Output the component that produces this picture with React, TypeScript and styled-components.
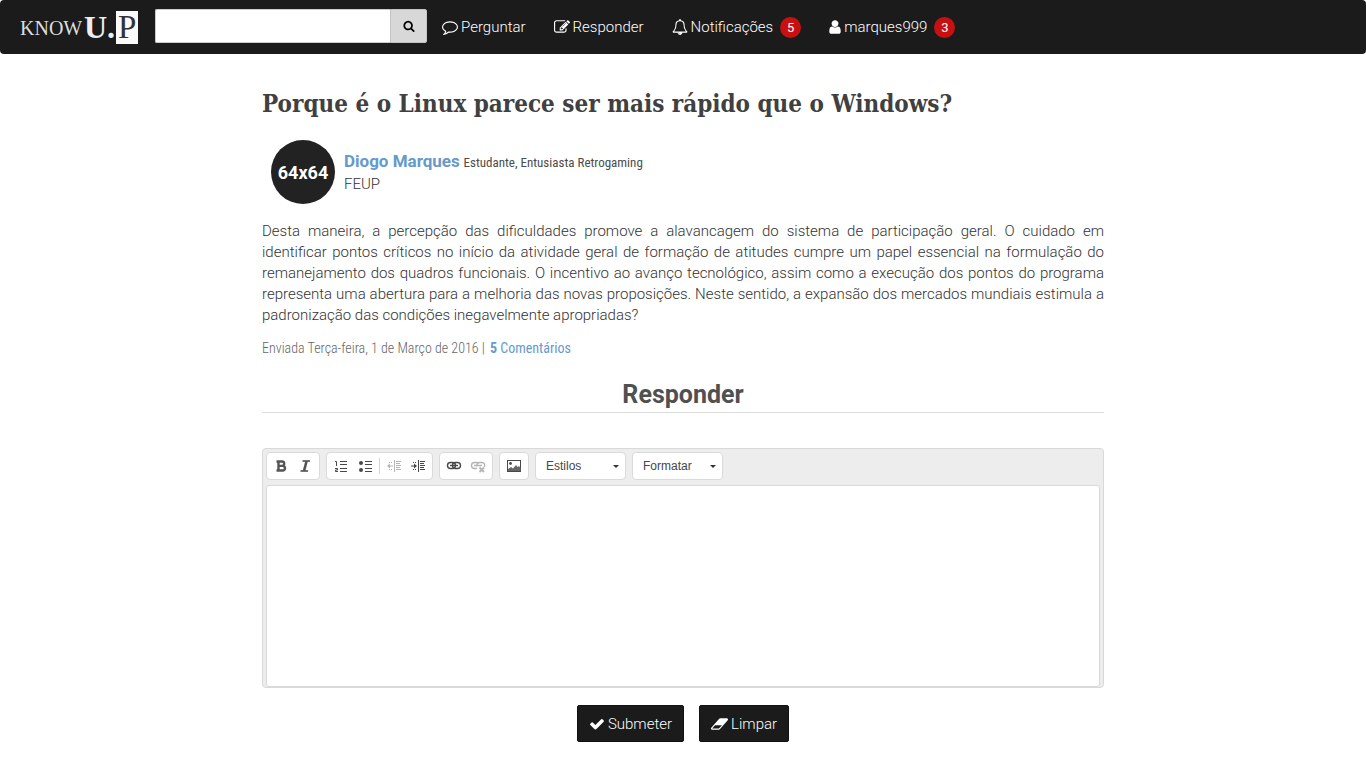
import React from 'react';
import styled, { createGlobalStyle } from 'styled-components';

const GlobalStyle = createGlobalStyle`
  *, *::before, *::after { box-sizing: border-box; }
  body {
    margin: 0;
    background: #fff;
    color: #333;
    font-family: Roboto, "Liberation Sans", sans-serif;
    font-size: 15px;
    line-height: 21px;
  }
  button, input, select, textarea { font: inherit; }
`;

const Navbar = styled.header`
  display: flex;
  align-items: center;
  min-height: 54px;
  padding: 0 20px 2px;
  background: #1b1b1b;
  border-radius: 4px;
`;

const Brand = styled.a`
  display: block;
  height: 44px;
  margin-right: 16px;
`;

const SearchForm = styled.form`
  display: flex;
  height: 34px;
  margin-right: 15px;
`;

const SearchInput = styled.input`
  width: 235px;
  padding: 0 8px;
  border: 1px solid #ccc;
  border-right: 0;
  border-radius: 2px 0 0 2px;
  background: #fff;
`;

const SearchButton = styled.button`
  display: flex;
  align-items: center;
  justify-content: center;
  width: 37px;
  padding: 0;
  border: 1px solid #c4c4c4;
  border-radius: 0 2px 2px 0;
  background: #d8d8d8;
  color: #000;
`;

const Menu = styled.nav`
  display: flex;
  align-items: center;
  gap: 28px;
  padding-top: 2px;
`;

const MenuLink = styled.a`
  display: flex;
  align-items: center;
  gap: 3px;
  color: #fff;
  font-size: 15px;
  font-weight: 350;
  line-height: 22px;
  text-decoration: none;
`;

const Badge = styled.span`
  width: 21px;
  height: 21px;
  margin-left: 4px;
  border-radius: 50%;
  background: #c81010;
  font-size: 13px;
  font-weight: 400;
  text-align: center;
`;

const Page = styled.main`
  max-width: 842px;
  margin: 0 auto;
  padding: 34px 0 26px;
`;

const Title = styled.h1`
  margin: 0 0 20px;
  color: #404040;
  font-family: "Roboto Slab", "DejaVu Serif Condensed", "DejaVu Serif", serif;
  font-size: 24px;
  font-weight: 700;
  line-height: 32px;
`;

const Author = styled.section`
  display: flex;
  align-items: center;
  gap: 9px;
  margin-bottom: 17px;
  padding-left: 9px;
`;

const Avatar = styled.div`
  display: flex;
  align-items: center;
  justify-content: center;
  width: 64px;
  height: 64px;
  border-radius: 50%;
  background: #222;
  color: #fff;
  font-size: 18px;
  font-weight: 700;
`;

const AuthorLine = styled.div`
  line-height: 23px;
`;

const AuthorName = styled.a`
  color: #6699cc;
  font-size: 17px;
  font-weight: 700;
  text-decoration: none;
`;

const AuthorRole = styled.small`
  color: #4c4c4c;
  font-family: "Roboto Condensed", Roboto, sans-serif;
  font-size: 13px;
`;

const School = styled.div`
  font-weight: 350;
`;

const Question = styled.p`
  margin: 0 0 12px;
  font-weight: 350;
  text-align: justify;
`;

const Meta = styled.div`
  margin-bottom: 20px;
  color: #666;
  font-family: "Roboto Condensed", Roboto, sans-serif;
  font-size: 14px;
  font-weight: 350;
`;

const CommentsLink = styled.a`
  margin-left: 2px;
  color: #6699cc;
  font-weight: 400;
  text-decoration: none;
`;

const SectionTitle = styled.h2`
  margin: 0 0 35px;
  padding-bottom: 1px;
  border-bottom: 1px solid #ddd;
  color: #505050;
  font-size: 25px;
  font-weight: 700;
  line-height: 32px;
  text-align: center;
`;

const Editor = styled.div`
  padding: 3px;
  padding-bottom: 0;
  border: 1px solid #d9d9d9;
  border-radius: 4px;
  background: #ededed;
`;

const Toolbar = styled.div`
  display: flex;
  flex-wrap: wrap;
  gap: 6px;
  margin-bottom: 5px;
`;

const ToolGroup = styled.div`
  display: flex;
  align-items: center;
  height: 28px;
  padding: 0 2px;
  border: 1px solid #dadada;
  border-radius: 4px;
  background: #fff;
`;

const ToolButton = styled.button`
  display: flex;
  align-items: center;
  justify-content: center;
  width: 24px;
  height: 24px;
  padding: 0;
  border: 0;
  background: none;
  color: #484848;

  &:disabled { opacity: 0.4; }
`;

const Divider = styled.span`
  width: 1px;
  height: 16px;
  margin: 0 2px;
  background: #d4d4d4;
`;

const Combo = styled.div`
  display: grid;
  align-items: center;
  width: 91px;
  height: 28px;
  border: 1px solid #dadada;
  border-radius: 4px;
  background: #fff;

  > * { grid-area: 1 / 1; }
  > svg { justify-self: end; margin-right: 6px; pointer-events: none; }
`;

const ComboSelect = styled.select`
  width: 100%;
  height: 26px;
  padding: 0 10px;
  border: 0;
  background: none;
  color: #474747;
  font-family: "Liberation Sans", Arial, sans-serif;
  font-size: 12px;
  appearance: none;
`;

const EditorArea = styled.textarea`
  display: block;
  width: 100%;
  height: 202px;
  padding: 12px;
  border: 1px solid #d9d9d9;
  border-radius: 3px;
  background: #fff;
  resize: none;
`;

const Actions = styled.div`
  display: flex;
  justify-content: center;
  gap: 15px;
  margin-top: 17px;
`;

const ActionButton = styled.button`
  display: flex;
  align-items: center;
  gap: 3px;
  height: 37px;
  padding: 1px 11px 0;
  border: 1px solid #111;
  border-radius: 2px;
  background: #1b1b1b;
  color: #fff;
  font-size: 15px;
  font-weight: 350;
`;

const glyphs = {
  search:
    'M1216 832q0-185-131.5-316.5t-316.5-131.5-316.5 131.5-131.5 316.5 131.5 316.5 316.5 131.5 316.5-131.5 131.5-316.5zm512 832q0 52-38 90t-90 38q-54 0-90-38l-343-342q-179 124-399 124-143 0-273.5-55.5t-225-150-150-225-55.5-273.5 55.5-273.5 150-225 225-150 273.5-55.5 273.5 55.5 225 150 150 225 55.5 273.5q0 220-124 399l343 343q37 37 37 90z',
  comment:
    'M896 384q-204 0-381.5 69.5t-282 187.5-104.5 255q0 112 71.5 213.5t201.5 175.5l87 50-27 96q-24 91-70 172 152-63 275-171l43-38 57 6q69 8 130 8 204 0 381.5-69.5t282-187.5 104.5-255-104.5-255-282-187.5-381.5-69.5zm896 512q0 174-120 321.5t-326 233-450 85.5q-70 0-145-8-198 175-460 242-49 14-114 22h-5q-15 0-27-10.5t-16-27.5v-1q-3-4-.5-12t2-10 4.5-9.5l6-9 7-8.5 8-9q7-8 31-34.5t34.5-38 31-39.5 32.5-51 27-59 26-76q-157-89-247.5-220t-90.5-281q0-174 120-321.5t326-233 450-85.5 450 85.5 326 233 120 321.5z',
  edit:
    'M888 1184l116-116-152-152-116 116v56h96v96h56zm440-720q-16-16-33 1l-350 350q-17 17-1 33t33-1l350-350q17-17 1-33zm80 594v190q0 119-84.5 203.5t-203.5 84.5h-832q-119 0-203.5-84.5t-84.5-203.5v-832q0-119 84.5-203.5t203.5-84.5h832q63 0 117 25 15 7 18 23 3 17-9 29l-49 49q-14 14-32 8-23-6-45-6h-832q-66 0-113 47t-47 113v832q0 66 47 113t113 47h832q66 0 113-47t47-113v-126q0-13 9-22l64-64q15-15 35-7t20 29zm-96-738l288 288-672 672h-288v-288zm444 132l-92 92-288-288 92-92q28-28 68-28t68 28l152 152q28 28 28 68t-28 68z',
  bell:
    'M912 1696q0-16-16-16-59 0-101.5-42.5t-42.5-101.5q0-16-16-16t-16 16q0 73 51.5 124.5t124.5 51.5q16 0 16-16zm-666-288h1300q-266-300-266-832 0-51-24-105t-69-103-121.5-80.5-169.5-31.5-169.5 31.5-121.5 80.5-69 103-24 105q0 532-266 832zm1482 0q0 52-38 90t-90 38h-448q0 106-75 181t-181 75-181-75-75-181h-448q-52 0-90-38t-38-90q50-42 91-88t85-119.5 74.5-158.5 50-206 19.5-260q0-152 117-282.5t307-158.5q-8-19-8-39 0-40 28-68t68-28 68 28 28 68q0 20-8 39 190 28 307 158.5t117 282.5q0 139 19.5 260t50 206 74.5 158.5 85 119.5 91 88z',
  user:
    'M1536 1399q0 109-62.5 187t-150.5 78h-854q-88 0-150.5-78t-62.5-187q0-85 8.5-160.5t31.5-152 58.5-131 94-89 134.5-34.5q131 128 313 128t313-128q76 0 134.5 34.5t94 89 58.5 131 31.5 152 8.5 160.5zm-256-887q0 159-112.5 271.5t-271.5 112.5-271.5-112.5-112.5-271.5 112.5-271.5 271.5-112.5 271.5 112.5 112.5 271.5z',
  check:
    'M1671 566q0 40-28 68l-724 724-136 136q-28 28-68 28t-68-28l-136-136-362-362q-28-28-28-68t28-68l136-136q28-28 68-28t68 28l294 295 656-657q28-28 68-28t68 28l136 136q28 28 28 68z',
  eraser:
    'M896 1408l336-384h-768l-336 384h768zm1013-1077q15 34 9.5 71.5t-30.5 65.5l-896 1024q-38 44-96 44h-768q-38 0-69.5-20.5t-47.5-54.5q-15-34-9.5-71.5t30.5-65.5l896-1024q38-44 96-44h768q38 0 69.5 20.5t47.5 54.5z',
};

type GlyphProps = { name: keyof typeof glyphs; size?: number; box?: string; width?: number };

function Glyph({ name, size = 16, width = size, box = '0 0 1792 1792' }: GlyphProps) {
  return (
    <svg width={width} height={size} viewBox={box} fill="currentColor" aria-hidden="true">
      <path d={glyphs[name]} />
    </svg>
  );
}

function Logo() {
  return (
    <svg width="119" height="44" viewBox="0 0 119 44" role="img" aria-label="KnowU.P" fontFamily="'Liberation Serif', serif">
      <text x="0" y="31" fontSize="20" fill="#ddd">KNOW</text>
      <text x="64" y="34" fontSize="32" fontWeight="700" fill="#eee">U.</text>
      <rect x="96" y="7" width="22" height="33" fill="#fafafa" />
      <text x="98" y="34" fontSize="33" fill="#333">P</text>
    </svg>
  );
}

/* Toolbar drawings share a 16 by 16 pixel grid. */
function ToolIcon({ children }: { children: React.ReactNode }) {
  return (
    <svg width="16" height="16" viewBox="0 0 16 16" fill="none" stroke="currentColor" aria-hidden="true">
      {children}
    </svg>
  );
}

const BoldIcon = () => (
  <ToolIcon>
    <path d="M5.5 3v10M3.5 3.5H9a2.2 2.2 0 0 1 0 4.4H5M9 7.9h.7a2.3 2.3 0 0 1 0 4.6H3.500" strokeWidth="2.4" stroke="#555" />
  </ToolIcon>
);
const ItalicIcon = () => (
  <ToolIcon>
    <path d="M5.5 3H13M3.5 13H11" strokeWidth="1.6" />
    <path d="M9.6 3L7 13" strokeWidth="2.6" stroke="#555" />
  </ToolIcon>
);
const NumberedIcon = () => (
  <ToolIcon>
    <path d="M7 3.5h7M7 6.5h7M7 10.5h7M7 13.5h7" />
    <path d="M2 3.5h1.5V8M2 10.500h2.500v1.500H2.500v1.500H5" />
  </ToolIcon>
);
const BulletIcon = () => (
  <ToolIcon>
    <path d="M8 3.5h7M8 6.5h7M8 10.5h7M8 13.5h7" />
    <circle cx="4" cy="5" r="2" fill="currentColor" stroke="none" />
    <circle cx="4" cy="12" r="2" fill="currentColor" stroke="none" />
  </ToolIcon>
);
const OutdentIcon = () => (
  <ToolIcon>
    <path d="M8.5 2v12" />
    <path d="M10 3.5h5M10 5.5h4M10 7.5h5M10 9.5h4M10 11.5h5" />
    <path d="M3 4.5h4M3 11.5h4" strokeDasharray="1 1" />
    <path d="M2 8h5" /><path d="M1 8l3-2.5v5z" fill="currentColor" stroke="none" />
  </ToolIcon>
);
const IndentIcon = () => (
  <ToolIcon>
    <path d="M8.5 2v12" />
    <path d="M10 3.5h5M10 5.5h4M10 7.5h5M10 9.5h4M10 11.5h5" />
    <path d="M3 4.5h4M3 11.5h4" strokeDasharray="1 1" />
    <path d="M1 8h5" /><path d="M7 8L4 5.5v5z" fill="currentColor" stroke="none" />
  </ToolIcon>
);
const LinkIcon = () => (
  <ToolIcon>
    <rect x="1.5" y="4.5" width="8" height="6" rx="3" strokeWidth="1.4" />
    <rect x="6.5" y="4.5" width="8" height="6" rx="3" strokeWidth="1.4" />
    <path d="M4 7.5h8" strokeWidth="1.4" />
  </ToolIcon>
);
const UnlinkIcon = () => (
  <ToolIcon>
    <path d="M7 10.5H4.5a3 3 0 0 1 0-6H7a3 3 0 0 1 2 1M7 8.5a3 3 0 0 1 2.5-4H12a3 3 0 0 1 2.3 4.500M4 7.500h8" strokeWidth="1.4" />
    <path d="M9.500 9.500L14 14M14 9.500L9.500 14" strokeWidth="1.8" />
  </ToolIcon>
);
const ImageIcon = () => (
  <ToolIcon>
    <rect x="1.5" y="2.5" width="13" height="11" />
    <circle cx="4.5" cy="5.5" r="1.4" fill="currentColor" stroke="none" />
    <path d="M2 13v-2l3-2 2 1.5L10 7l1.5 2L13 8l1.5 2v3z" fill="#666" stroke="none" />
  </ToolIcon>
);
const Caret = () => (
  <svg width="6" height="3" viewBox="0 0 6 3" aria-hidden="true"><path d="M0 0h6L3 3z" fill="#333" /></svg>
);

export default function App() {
  return (
    <>
      <GlobalStyle />
      <Navbar>
        <Brand href="#"><Logo /></Brand>
        <SearchForm role="search">
          <SearchInput type="text" aria-label="Pesquisar" />
          <SearchButton type="button" aria-label="Pesquisar"><Glyph name="search" size={12} /></SearchButton>
        </SearchForm>
        <Menu>
          <MenuLink href="#"><Glyph name="comment" />Perguntar</MenuLink>
          <MenuLink href="#"><Glyph name="edit" />Responder</MenuLink>
          <MenuLink href="#"><Glyph name="bell" />Notificações<Badge>5</Badge></MenuLink>
          <MenuLink href="#"><Glyph name="user" width={12} box="224 0 1344 1792" />marques999<Badge>3</Badge></MenuLink>
        </Menu>
      </Navbar>
      <Page>
        <Title>Porque é o Linux parece ser mais rápido que o Windows?</Title>
        <Author>
          <Avatar>64x64</Avatar>
          <div>
            <AuthorLine>
              <AuthorName href="#">Diogo Marques</AuthorName>{' '}
              <AuthorRole>Estudante, Entusiasta Retrogaming</AuthorRole>
            </AuthorLine>
            <School>FEUP</School>
          </div>
        </Author>
        <Question>
          Desta maneira, a percepção das dificuldades promove a alavancagem do sistema de participação geral. O
          cuidado em identificar pontos críticos no início da atividade geral de formação de atitudes cumpre um
          papel essencial na formulação do remanejamento dos quadros funcionais. O incentivo ao avanço tecnológico,
          assim como a execução dos pontos do programa representa uma abertura para a melhoria das novas
          proposições. Neste sentido, a expansão dos mercados mundiais estimula a padronização das condições
          inegavelmente apropriadas?
        </Question>
        <Meta>
          Enviada Terça-feira, 1 de Março de 2016 |{' '}
          <CommentsLink href="#"><strong>5</strong> Comentários</CommentsLink>
        </Meta>
        <SectionTitle>Responder</SectionTitle>
        <form>
          <Editor>
            <Toolbar role="toolbar" aria-label="Formatação">
              <ToolGroup>
                <ToolButton type="button" aria-label="Negrito"><BoldIcon /></ToolButton>
                <ToolButton type="button" aria-label="Itálico"><ItalicIcon /></ToolButton>
              </ToolGroup>
              <ToolGroup>
                <ToolButton type="button" aria-label="Lista numerada"><NumberedIcon /></ToolButton>
                <ToolButton type="button" aria-label="Marcadores"><BulletIcon /></ToolButton>
                <Divider />
                <ToolButton type="button" aria-label="Diminuir recuo" disabled><OutdentIcon /></ToolButton>
                <ToolButton type="button" aria-label="Aumentar recuo"><IndentIcon /></ToolButton>
              </ToolGroup>
              <ToolGroup>
                <ToolButton type="button" aria-label="Inserir hiperligação"><LinkIcon /></ToolButton>
                <ToolButton type="button" aria-label="Remover hiperligação" disabled><UnlinkIcon /></ToolButton>
              </ToolGroup>
              <ToolGroup>
                <ToolButton type="button" aria-label="Imagem"><ImageIcon /></ToolButton>
              </ToolGroup>
              <Combo>
                <ComboSelect aria-label="Estilos"><option>Estilos</option></ComboSelect>
                <Caret />
              </Combo>
              <Combo>
                <ComboSelect aria-label="Formatar"><option>Formatar</option></ComboSelect>
                <Caret />
              </Combo>
            </Toolbar>
            <EditorArea aria-label="Resposta" />
          </Editor>
          <Actions>
            <ActionButton type="submit"><Glyph name="check" />Submeter</ActionButton>
            <ActionButton type="reset"><Glyph name="eraser" width={17} box="0 0 1920 1792" />Limpar</ActionButton>
          </Actions>
        </form>
      </Page>
    </>
  );
}
